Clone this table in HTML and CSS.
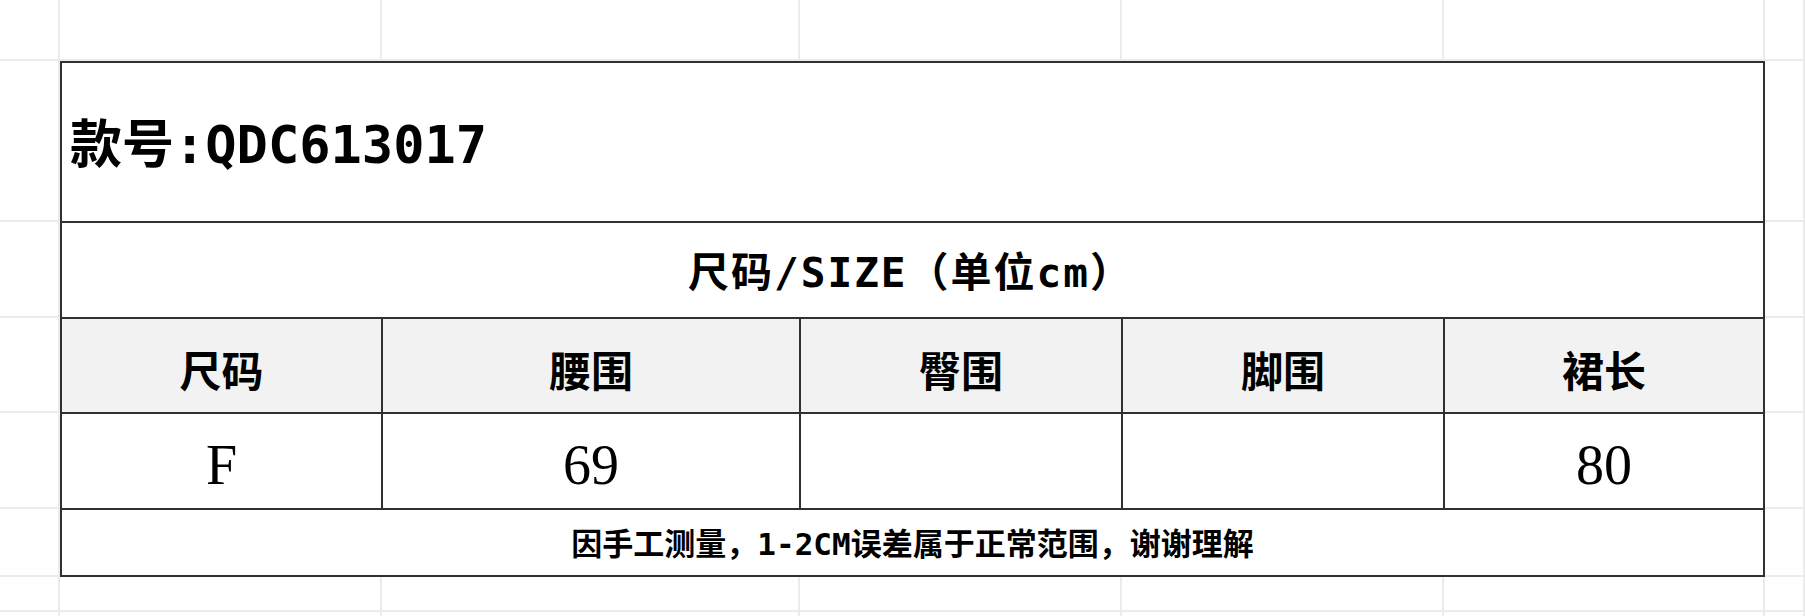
FILE: index.html
```html
<!DOCTYPE html>
<html lang="zh-CN">
<head>
<meta charset="utf-8">
<title>尺码表</title>
<link rel="stylesheet" href="styles.css">
</head>
<body>
<div class="sheet">
  <div class="g"></div><div class="g"></div><div class="g"></div><div class="g"></div><div class="g"></div><div class="g"></div><div class="g"></div>

  <div class="g r2"></div>
  <div class="tbl">
    <div class="c title">款号:QDC613017</div>
    <div class="c sub">尺码/SIZE（单位cm）</div>
    <div class="c hd">尺码</div>
    <div class="c hd">腰围</div>
    <div class="c hd">臀围</div>
    <div class="c hd">脚围</div>
    <div class="c hd">裙长</div>
    <div class="c val">F</div>
    <div class="c val">69</div>
    <div class="c val"></div>
    <div class="c val"></div>
    <div class="c val">80</div>
    <div class="c note">因手工测量，1-2CM误差属于正常范围，谢谢理解</div>
  </div>
  <div class="g r2 right"></div>
  <div class="g r3"></div><div class="g r3 right"></div>
  <div class="g r4"></div><div class="g r4 right"></div>
  <div class="g r5"></div><div class="g r5 right"></div>
  <div class="g r6"></div><div class="g r6 right"></div>

  <div class="g"></div><div class="g"></div><div class="g"></div><div class="g"></div><div class="g"></div><div class="g"></div><div class="g"></div>
  <div class="g"></div><div class="g"></div><div class="g"></div><div class="g"></div><div class="g"></div><div class="g"></div><div class="g"></div>
</div>
</body>
</html>
```
FILE: styles.css
```css
html, body {
  margin: 0;
  padding: 0;
  background: #ffffff;
}

.sheet {
  width: 1805px;
  height: 616px;
  overflow: hidden;
  display: grid;
  grid-template-columns: 60px 322px 418px 322px 322px 321px 40px;
  grid-template-rows: 61px 161px 96px 95px 96px 68px 35px 40px;
}

.g {
  box-sizing: border-box;
  border-right: 2px solid #ebebeb;
  border-bottom: 2px solid #ebebeb;
}

.g.r2 { grid-row: 2; grid-column: 1; }
.g.r3 { grid-row: 3; grid-column: 1; }
.g.r4 { grid-row: 4; grid-column: 1; }
.g.r5 { grid-row: 5; grid-column: 1; }
.g.r6 { grid-row: 6; grid-column: 1; }
.g.right { grid-column: 7; }

.tbl {
  grid-column: 2 / 7;
  grid-row: 2 / 7;
  box-sizing: border-box;
  background: #303030;
  padding: 2px;
  display: grid;
  gap: 2px;
  grid-template-columns: 319px 416px 320px 320px 318px;
  grid-template-rows: 158px 94px 93px 94px 65px;
}

.c {
  background: #ffffff;
  color: #000000;
  display: flex;
  align-items: center;
  justify-content: center;
  line-height: 1;
  padding-top: 6px;
  box-sizing: border-box;
}

.title {
  grid-column: 1 / 6;
  justify-content: flex-start;
  padding-left: 8px;
  font-family: "DejaVu Sans Mono", "Noto Sans CJK SC", monospace;
  font-weight: 700;
  font-size: 52px;
}

.sub {
  grid-column: 1 / 6;
  font-family: "DejaVu Sans Mono", "Noto Sans CJK SC", monospace;
  font-weight: 700;
  font-size: 41px;
  letter-spacing: 2px;
  padding-right: 4px;
}

.hd {
  background: #f2f2f2;
  font-family: "Noto Sans CJK SC", sans-serif;
  font-weight: 700;
  font-size: 42px;
}

.val {
  font-family: "Liberation Serif", "Times New Roman", serif;
  font-weight: 400;
  font-size: 56px;
  padding-top: 8px;
}

.note {
  grid-column: 1 / 6;
  font-family: "DejaVu Sans Mono", "Noto Sans CJK SC", monospace;
  font-weight: 700;
  font-size: 31px;
  padding-top: 4px;
}
```
